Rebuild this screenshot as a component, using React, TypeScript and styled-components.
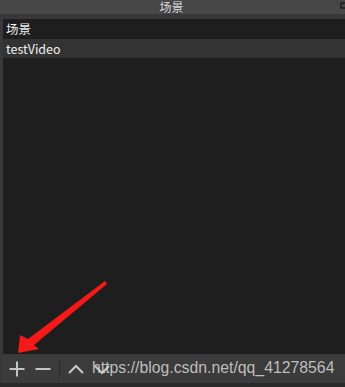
import React from 'react';
import styled, { createGlobalStyle } from 'styled-components';

const GlobalStyle = createGlobalStyle`
  html, body {
    margin: 0;
    padding: 0;
    background: #2b2b2b;
    overflow: hidden;
  }
`;

const App = () => {
  return (
    <>
      <GlobalStyle />
      <Frame>
        <TitleBar>
          <TitleText>场景</TitleText>
          <DockIcon viewBox="0 0 8 8">
            <rect x="1" y="1" width="6" height="5" fill="none" stroke="#0a0a0a" strokeWidth="1" />
          </DockIcon>
        </TitleBar>
        <Panel>
          <List>
            <Row>场景</Row>
            <Row selected>testVideo</Row>
          </List>
          <Toolbar>
            <ToolButton>
              <svg width="16" height="16" viewBox="0 0 16 16">
                <path d="M8 0.5v15M0.5 8h15" stroke="#c4c4c4" strokeWidth="2" />
              </svg>
            </ToolButton>
            <ToolButton>
              <svg width="16" height="16" viewBox="0 0 16 16">
                <path d="M0.5 8h15" stroke="#c4c4c4" strokeWidth="2" />
              </svg>
            </ToolButton>
            <Separator />
            <ToolButton>
              <svg width="16" height="16" viewBox="0 0 16 16">
                <path d="M1 12L8 5l7 7" fill="none" stroke="#c4c4c4" strokeWidth="2.2" />
              </svg>
            </ToolButton>
            <ToolButton>
              <svg width="16" height="16" viewBox="0 0 16 16">
                <path d="M1 5l7 7 7-7" fill="none" stroke="#c4c4c4" strokeWidth="2.2" />
              </svg>
            </ToolButton>
          </Toolbar>
          <BottomStrip />
        </Panel>
        <Watermark>https://blog.csdn.net/qq_41278564</Watermark>
        <Arrow viewBox="0 0 345 387" width="345" height="387">
          <polygon
            points="18,353 20,335 28,339 105,281 107,284 34,345 39,349"
            fill="#f41a1a"
          />
        </Arrow>
      </Frame>
    </>
  );
};

const Frame = styled.div`
  position: relative;
  width: 345px;
  height: 387px;
  display: flex;
  flex-direction: column;
  font-family: "Noto Sans CJK SC", "Noto Sans", sans-serif;
`;

const TitleBar = styled.div`
  position: relative;
  height: 14px;
  background: #474747;
  display: flex;
  justify-content: center;
  align-items: center;
  padding-right: 2px;
`;

const TitleText = styled.span`
  color: #d8d8d8;
  font-size: 12px;
  line-height: 14px;
  height: 14px;
`;

const DockIcon = styled.svg`
  position: absolute;
  right: -3px;
  top: 2px;
  width: 8px;
  height: 8px;
`;

const Panel = styled.div`
  flex: 1;
  display: flex;
  flex-direction: column;
  background: #383838;
  padding: 5px 0 0 3px;
`;

const List = styled.div`
  flex: 1;
  background: #1e1e1e;
  display: flex;
  flex-direction: column;
`;

const Row = styled.div<{ selected?: boolean }>`
  height: 19px;
  margin-bottom: 1px;
  padding-left: 3px;
  display: flex;
  align-items: center;
  font-size: 12.5px;
  color: #f0f0f0;
  background: ${(p) => (p.selected ? '#333333' : 'transparent')};
`;

const Toolbar = styled.div`
  height: 29px;
  background: #3b3b3b;
  display: flex;
  align-items: center;
  padding-left: 6px;
`;

const ToolButton = styled.div`
  width: 16px;
  height: 16px;
  margin-right: 10px;
  display: flex;
  align-items: center;
  justify-content: center;
`;

const Separator = styled.div`
  width: 1px;
  height: 18px;
  background: #2c2c2c;
  margin: 0 8px 0 -2px;
`;

const BottomStrip = styled.div`
  height: 4px;
  background: #2a2a2a;
  margin-left: -3px;
`;

const Watermark = styled.div`
  position: absolute;
  left: 92px;
  top: 359px;
  font-family: "Liberation Sans", Arial, sans-serif;
  font-size: 15.8px;
  line-height: 18px;
  color: rgba(215, 215, 215, 0.85);
  pointer-events: none;
`;

const Arrow = styled.svg`
  position: absolute;
  left: 0;
  top: 0;
  pointer-events: none;
`;

export default App;
